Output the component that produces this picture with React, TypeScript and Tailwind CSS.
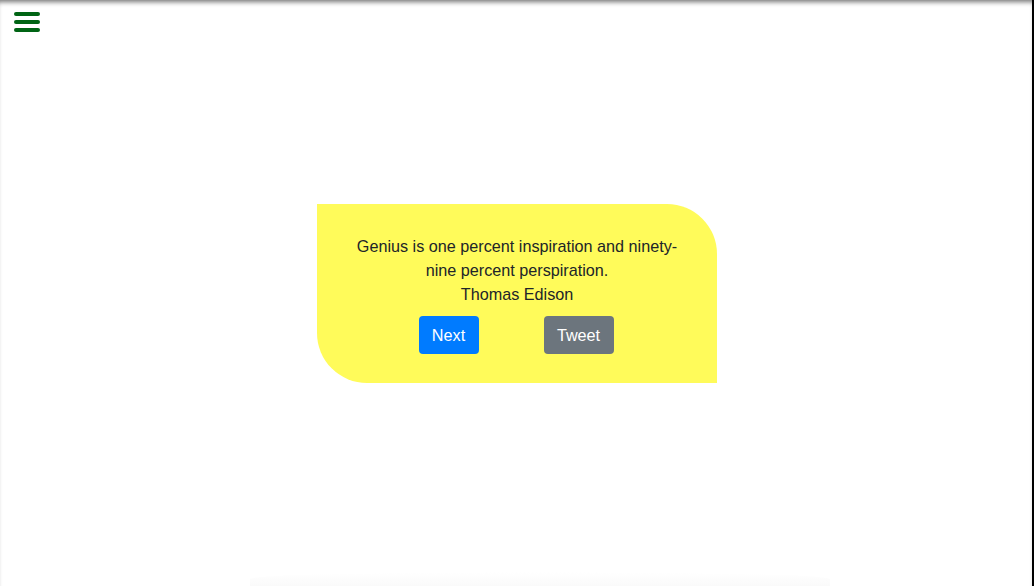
export default function App() {
  return (
    <div className="flex h-[586px] w-full bg-white" style={{ fontFamily: '"Liberation Sans", Arial, sans-serif' }}>
      <div className="relative flex flex-1 items-center justify-center bg-white shadow-[inset_0_5px_5px_-3px_rgba(0,0,0,0.55)]">
        <button className="absolute left-[14px] top-[12px] flex flex-col gap-[4px]" aria-label="menu">
          <span className="block h-[4px] w-[26px] rounded-full bg-[#006414]" />
          <span className="block h-[4px] w-[26px] rounded-full bg-[#006414]" />
          <span className="block h-[4px] w-[26px] rounded-full bg-[#006414]" />
        </button>
        <div className="pointer-events-none absolute bottom-0 left-[250px] h-[14px] w-[580px] rounded-t-[50%] bg-gradient-to-b from-transparent to-[#fafafa]" />
        <div className="ml-[2px] flex w-[400px] flex-col items-center rounded-tr-[50px] rounded-bl-[50px] bg-[#fffb5a] px-8 pb-[29px] pt-[30px] text-center text-[16.2px] leading-[24px] text-[#212529]">
          <p>Genius is one percent inspiration and ninety-nine percent perspiration.</p>
          <p>Thomas Edison</p>
          <div className="mr-[2px] mt-[10px] flex gap-[65px]">
            <button className="h-[38px] w-[60px] rounded-[4px] bg-[#007bff] pt-[1px] text-[16.2px] text-white">Next</button>
            <button className="h-[38px] w-[70px] rounded-[4px] bg-[#6c757d] pt-[1px] text-[16.2px] text-white">Tweet</button>
          </div>
        </div>
      </div>
      <div className="w-[2px] bg-black" />
    </div>
  );
}
